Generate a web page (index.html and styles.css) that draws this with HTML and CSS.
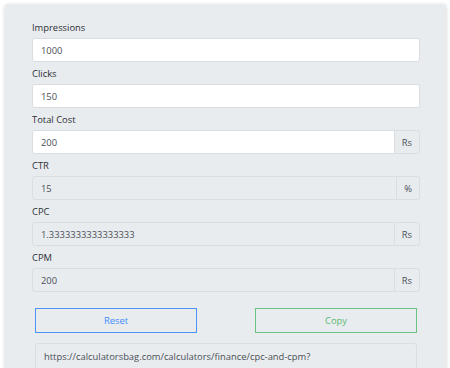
FILE: index.html
```html
<!DOCTYPE html>
<html lang="en">
<head>
    <meta charset="UTF-8">
    <meta name="viewport" content="width=device-width, initial-scale=1.0">
    <title>CPC and CPM Calculator</title>
    <link rel="stylesheet" href="styles.css">
</head>
<body>
    <div class="card">
        <div class="field">
            <label for="impressions">Impressions</label>
            <input id="impressions" class="input" type="text" value="1000">
        </div>
        <div class="field">
            <label for="clicks">Clicks</label>
            <input id="clicks" class="input" type="text" value="150">
        </div>
        <div class="field">
            <label for="cost">Total Cost</label>
            <div class="group">
                <input id="cost" class="input" type="text" value="200">
                <span class="addon">Rs</span>
            </div>
        </div>
        <div class="field">
            <label for="ctr">CTR</label>
            <div class="group">
                <input id="ctr" class="input" type="text" value="15" readonly>
                <span class="addon">%</span>
            </div>
        </div>
        <div class="field">
            <label for="cpc">CPC</label>
            <div class="group">
                <input id="cpc" class="input" type="text" value="1.3333333333333333" readonly>
                <span class="addon">Rs</span>
            </div>
        </div>
        <div class="field">
            <label for="cpm">CPM</label>
            <div class="group">
                <input id="cpm" class="input" type="text" value="200" readonly>
                <span class="addon">Rs</span>
            </div>
        </div>

        <div class="actions">
            <button class="btn btn-reset">Reset</button>
            <button class="btn btn-copy">Copy</button>
        </div>

        <!-- share link, wraps after the query mark like the original -->
        <div class="share">https://calculatorsbag.com/calculators/finance/cpc-and-cpm?<br>impressions=10000&amp;clicks=1500&amp;totalcost=200</div>
    </div>
</body>
</html>
```

FILE: styles.css
```css
body {
    margin: 0;
    background-color: #fff;
    font-family: 'Open Sans', 'Lato', sans-serif;
    font-size: 9.4px;
    color: #2b3035;
}
.card {
    margin: 4px 0 0 5px;
    width: 441px;
    box-sizing: border-box;
    padding: 16px 26px 20px 27px;
    background-color: #e9ecef;
    border-radius: 3px;
    box-shadow: 0 1px 4px rgba(0, 0, 0, 0.18);
    min-height: 400px;
}
.field {
    margin-bottom: 4px;
}
.field label {
    display: block;
    line-height: 15px;
    margin-bottom: 3px;
}
.input {
    display: block;
    width: 100%;
    box-sizing: border-box;
    height: 24px;
    padding: 0 8px;
    font-family: inherit;
    font-size: 9.4px;
    color: #495057;
    background-color: #fff;
    border: 1px solid #dadee2;
    border-radius: 3px;
    outline: none;
}
.input[readonly] {
    background-color: #e9ecef;
}
.group {
    display: flex;
}
.group .input {
    flex: 1;
    border-radius: 3px 0 0 3px;
}
.addon {
    display: flex;
    align-items: center;
    padding: 0 7px;
    color: #495057;
    background-color: #e9ecef;
    border: 1px solid #dadee2;
    border-left: none;
    border-radius: 0 3px 3px 0;
}
.actions {
    display: flex;
    justify-content: space-between;
    padding: 0 3px;
    margin-top: 16px;
}
.btn {
    width: 162px;
    height: 25px;
    font-family: inherit;
    font-size: 9.4px;
    background: transparent;
    border-radius: 0;
    cursor: pointer;
}
.btn-reset {
    color: #3d8bfd;
    border: 1px solid #4d94f8;
}
.btn-copy {
    color: #5cb870;
    border: 1px solid #6cc280;
}
.share {
    margin: 10px 3px 0;
    padding: 5px 8px;
    line-height: 15px;
    color: #495057;
    border: 1px solid #dadee2;
    border-radius: 3px;
}
```
